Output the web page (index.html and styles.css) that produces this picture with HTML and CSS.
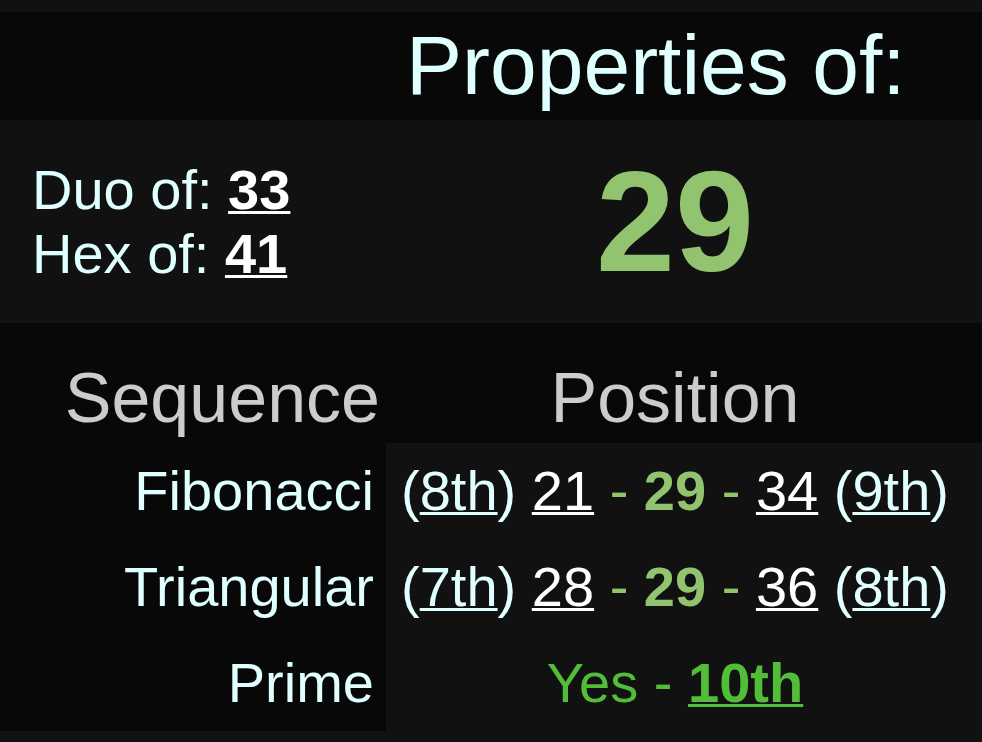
FILE: index.html
```html
<!DOCTYPE html>
<html>
<head>
<meta charset="utf-8">
<link rel="stylesheet" href="styles.css">
</head>
<body>
<div class="sheet">
  <div class="cell title-l"></div>
  <div class="cell title-r">Properties of:</div>

  <div class="cell info-l">
    <div>Duo of: <a class="num">33</a></div>
    <div>Hex of: <a class="num">41</a></div>
  </div>
  <div class="cell info-r">29</div>

  <div class="cell head-l">Sequence</div>
  <div class="cell head-r">Position</div>

  <div class="cell seq">Fibonacci</div>
  <div class="cell pos">(<a class="ord">8th</a>) <a class="val">21</a> <span class="dash">-</span> <b class="cur">29</b> <span class="dash">-</span> <a class="val">34</a> (<a class="ord">9th</a>)</div>

  <div class="cell seq">Triangular</div>
  <div class="cell pos">(<a class="ord">7th</a>) <a class="val">28</a> <span class="dash">-</span> <b class="cur">29</b> <span class="dash">-</span> <a class="val">36</a> (<a class="ord">8th</a>)</div>

  <div class="cell seq">Prime</div>
  <div class="cell pos prime">Yes - <a class="pidx">10th</a></div>
</div>
</body>
</html>
```

FILE: styles.css
```css
html, body {
  margin: 0;
  background: #111111;
}
body {
  padding-top: 12px;
  font-family: "Liberation Sans", Arial, Helvetica, sans-serif;
  color: #e0ffff;
}
.sheet {
  display: grid;
  grid-template-columns: 386px 1fr;
}
.cell {
  box-sizing: border-box;
}
.title-l, .title-r {
  background: #080808;
  height: 108px;
}
.title-r {
  font-size: 84px;
  line-height: 106px;
  padding-left: 20px;
  white-space: nowrap;
  color: #e0ffff;
}
.info-l, .info-r {
  background: #111111;
  height: 203px;
}
.info-l {
  display: flex;
  flex-direction: column;
  justify-content: center;
  padding-left: 32px;
  font-size: 56px;
  line-height: 64px;
}
.num {
  color: #ffffff;
  font-weight: bold;
  text-decoration: underline;
  text-decoration-thickness: 3px;
}
.info-r {
  display: flex;
  align-items: center;
  justify-content: center;
  padding-right: 18px;
  font-size: 142px;
  font-weight: bold;
  color: #92c46f;
}
.head-l, .head-r {
  background: #080808;
  height: 120px;
  padding-top: 35px;
  font-size: 70px;
  line-height: normal;
  color: #cccccc;
}
.head-l {
  text-align: right;
  padding-right: 6px;
}
.head-r {
  text-align: center;
  padding-right: 18px;
}
.seq, .pos {
  height: 96px;
  font-size: 56px;
  line-height: 96px;
  white-space: nowrap;
}
.seq {
  background: #080808;
  text-align: right;
  padding-right: 12px;
}
.pos {
  background: #111111;
  text-align: center;
  padding-right: 18px;
}
.ord {
  color: #e0ffff;
  text-decoration: underline;
  text-decoration-thickness: 3px;
}
.val {
  color: #ffffff;
  text-decoration: underline;
  text-decoration-thickness: 3px;
}
.dash {
  color: #92c46f;
}
.cur {
  color: #92c46f;
  font-weight: bold;
}
.prime {
  color: #52bd38;
}
.pidx {
  color: #52bd38;
  font-weight: bold;
  text-decoration: underline;
  text-decoration-thickness: 3px;
}
```
